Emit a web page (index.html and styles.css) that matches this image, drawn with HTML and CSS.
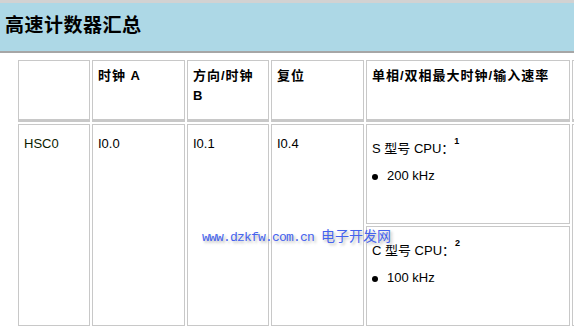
FILE: index.html
```html
<!DOCTYPE html>
<html lang="zh-CN">
<head>
<meta charset="utf-8">
<title>高速计数器汇总</title>
<link rel="stylesheet" href="styles.css">
</head>
<body>
<div class="title">高速计数器汇总</div>
<table class="grid">
  <tr class="head-row">
    <th class="c1"></th>
    <th class="c2">时钟 A</th>
    <th class="c3">方向/时钟 B</th>
    <th class="c4">复位</th>
    <th class="c5">单相/双相最大时钟/输入速率</th>
    <th class="c6"></th>
  </tr>
  <tr class="body-row">
    <td class="plain hsc" rowspan="2">HSC0</td>
    <td class="plain" rowspan="2">I0.0</td>
    <td class="plain" rowspan="2">I0.1</td>
    <td class="plain" rowspan="2">I0.4</td>
    <td class="rate">
      <p class="cpu">S 型号 CPU<span class="colon">：</span><sup>1</sup></p>
      <ul class="speeds"><li>200 kHz</li></ul>
    </td>
    <td class="plain" rowspan="2"></td>
  </tr>
  <tr class="body-row">
    <td class="rate">
      <p class="cpu">C 型号 CPU<span class="colon">：</span><sup>2</sup></p>
      <ul class="speeds"><li>100 kHz</li></ul>
    </td>
  </tr>
</table>
<div class="watermark"><span class="wm-url">www.dzkfw.com.cn</span><span class="wm-cn">电子开发网</span></div>
</body>
</html>
```
FILE: styles.css
```css
html, body {
  margin: 0;
  padding: 0;
  overflow: hidden;
  background: #ffffff;
}

body {
  font-family: "Liberation Sans", "Noto Sans CJK SC", sans-serif;
  color: #000;
}

.title {
  height: 48px;
  line-height: 41px;
  background: #add8e6;
  border-top: 3px solid #d2d2d2;
  border-bottom: 2px solid #a6a6a6;
  padding-left: 5px;
  font-family: "Noto Sans CJK SC", sans-serif;
  font-size: 19px;
  font-weight: bold;
  letter-spacing: 0.5px;
}

.grid {
  border-collapse: separate;
  border-spacing: 2px;
  table-layout: fixed;
  width: 758px;
  margin: 5px 0 0 16px;
}

.grid th,
.grid td {
  box-sizing: border-box;
  border: 1px solid #c8c8c8;
  vertical-align: top;
  text-align: left;
  padding: 0 5px;
}

.grid th {
  border-bottom-width: 3px;
  font-size: 13px;
  font-weight: bold;
  line-height: 20px;
  padding-top: 5px;
  letter-spacing: 1px;
}

.c1 { width: 72px; }
.c2 { width: 93px; }
.c3 { width: 82px; }
.c4 { width: 93px; }
.c5 { width: 204px; }
.c6 { width: 200px; }

.head-row { height: 62px; }
.body-row { height: 100px; }

td.plain {
  font-size: 13px;
  line-height: 16px;
  padding-top: 11px;
}

td.hsc { color: #0c1c00; }

td.rate {
  font-size: 13px;
  line-height: 20px;
  padding-top: 13px;
}

.cpu { margin: 0; }

.colon { font-family: "Noto Sans CJK TC", sans-serif; }

.cpu sup {
  font-size: 9px;
  font-weight: bold;
  line-height: 0;
  vertical-align: 9px;
}

.speeds {
  list-style: none;
  margin: 7px 0 0;
  padding: 0;
}

.speeds li::before {
  content: "";
  display: inline-block;
  width: 6px;
  height: 6px;
  border-radius: 50%;
  background: #000;
  margin-right: 9px;
  vertical-align: 0;
}

.watermark {
  position: absolute;
  left: 202px;
  top: 226px;
  line-height: 18px;
  color: #4563ee;
  white-space: nowrap;
  text-shadow: 2px 2px 3px #b8b8b8;
}

.wm-url {
  font-family: "Liberation Mono", monospace;
  font-size: 13px;
  letter-spacing: -0.8px;
}

.wm-cn {
  font-family: "Noto Sans CJK SC", sans-serif;
  font-size: 14px;
  margin-left: 7px;
}
```
